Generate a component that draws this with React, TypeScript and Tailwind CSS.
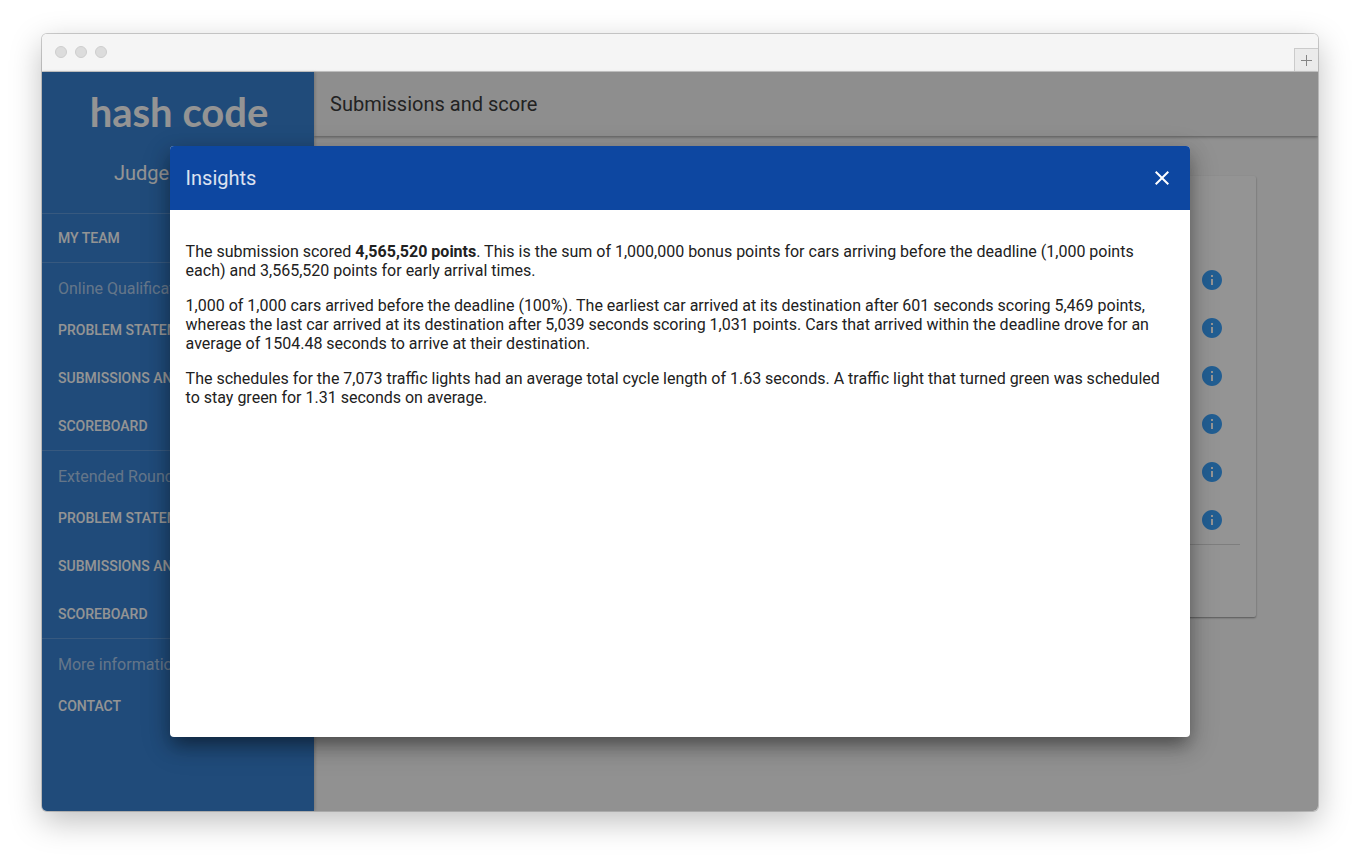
import React from "react";

type NavGroup = { heading?: string; items: string[] };

const groups: NavGroup[] = [
  { items: ["My team"] },
  {
    heading: "Online Qualifications",
    items: ["Problem statement", "Submissions and score", "Scoreboard"],
  },
  {
    heading: "Extended Round",
    items: ["Problem statement", "Submissions and score", "Scoreboard"],
  },
  { heading: "More information", items: ["Contact"] },
];

function InfoIcon() {
  return (
    <svg viewBox="0 0 24 24" className="size-6" fill="currentColor" aria-hidden="true">
      <path d="M12 2C6.48 2 2 6.48 2 12s4.48 10 10 10 10-4.48 10-10S17.52 2 12 2zm1 15h-2v-6h2v6zm0-8h-2V7h2v2z" />
    </svg>
  );
}

function CloseIcon() {
  return (
    <svg viewBox="0 0 24 24" className="size-6" fill="currentColor" aria-hidden="true">
      <path d="M19 6.41 17.59 5 12 10.59 6.41 5 5 6.41 10.59 12 5 17.59 6.41 19 12 13.41 17.59 19 19 17.59 13.41 12z" />
    </svg>
  );
}

function TitleBar() {
  return (
    <div className="flex h-[38px] shrink-0 items-start justify-between border-b border-[#cbcbcb] bg-[#f5f5f5] pl-[13px]">
      <div className="flex gap-2 pt-3">
        <span className="size-3 rounded-full border border-[#cecece] bg-[#dcdcdc]" />
        <span className="size-3 rounded-full border border-[#cecece] bg-[#dcdcdc]" />
        <span className="size-3 rounded-full border border-[#cecece] bg-[#dcdcdc]" />
      </div>
      <button
        aria-label="New tab"
        className="flex h-[23px] w-6 items-center justify-center self-end border-t border-l border-[#cbcbcb] bg-[#ebebeb] text-[#858585]"
      >
        <svg viewBox="0 0 11 11" className="size-[11px]" stroke="currentColor" aria-hidden="true">
          <path d="M5.5 0v11M0 5.5h11" />
        </svg>
      </button>
    </div>
  );
}

function Sidebar() {
  return (
    <nav className="z-10 w-[272px] shrink-0 bg-[#3781d2] text-white shadow-[1px_0_3px_rgba(0,0,0,0.2)]">
      <div className="flex h-[141px] flex-col">
        <div className="flex h-20 items-center justify-center pl-0.5 font-['Lato',sans-serif] text-[40px] leading-none font-bold">
          hash code
        </div>
        <div className="pt-[7px] pl-[72px] text-xl">Judge</div>
      </div>
      {groups.map((group, i) => (
        <div key={i} className="border-t border-white/20">
          {group.heading && (
            <h2 className="flex h-[43px] items-end px-4 pb-[5px] leading-6 text-white/60">{group.heading}</h2>
          )}
          <ul>
            {group.items.map((item) => (
              <li key={item}>
                <a href="#" className="flex h-12 items-center px-4 text-sm font-medium whitespace-nowrap uppercase">
                  {item}
                </a>
              </li>
            ))}
          </ul>
        </div>
      ))}
    </nav>
  );
}

function ScoreCard() {
  return (
    <section className="mx-[62px] mt-10 rounded-xs bg-white px-4 pt-20 pb-[72px] shadow-[0_1px_2px_rgba(0,0,0,0.4)]">
      <ul className="border-b border-black/15">
        {[0, 1, 2, 3, 4, 5].map((row) => (
          <li key={row} className="flex h-12 items-center justify-end pr-4">
            <button aria-label="Insights" className="text-[#3ca2fc]">
              <InfoIcon />
            </button>
          </li>
        ))}
      </ul>
    </section>
  );
}

function InsightsDialog() {
  return (
    <div className="absolute inset-0 z-20 flex items-center justify-center bg-black/42">
      <div
        role="dialog"
        aria-labelledby="insights-title"
        className="flex h-4/5 w-4/5 flex-col overflow-hidden rounded-sm bg-white shadow-[0_11px_15px_-7px_rgba(0,0,0,0.2),0_9px_30px_4px_rgba(0,0,0,0.1),0_8px_20px_rgba(0,0,0,0.3)]"
      >
        <header className="flex h-16 shrink-0 items-center justify-between bg-[#0d47a1] px-4 text-white/85">
          <h2 id="insights-title" className="text-xl">
            Insights
          </h2>
          <button aria-label="Close" className="text-white">
            <CloseIcon />
          </button>
        </header>
        <div className="space-y-4 px-4 py-8 leading-[19px] text-[#212121]">
          <p>
            The submission scored <strong className="font-bold">4,565,520 points</strong>. This is the sum of 1,000,000
            bonus points for cars arriving before the deadline (1,000 points each) and 3,565,520 points for early
            arrival times.
          </p>
          <p>
            1,000 of 1,000 cars arrived before the deadline (100%). The earliest car arrived at its destination after
            601 seconds scoring 5,469 points, whereas the last car arrived at its destination after 5,039 seconds
            scoring 1,031 points. Cars that arrived within the deadline drove for an average of 1504.48 seconds to
            arrive at their destination.
          </p>
          <p>
            The schedules for the 7,073 traffic lights had an average total cycle length of 1.63 seconds. A traffic
            light that turned green was scheduled to stay green for 1.31 seconds on average.
          </p>
        </div>
      </div>
    </div>
  );
}

export default function App() {
  return (
    <div className="flex min-h-screen bg-white px-[42px] pt-[34px] pb-[50px] font-['Roboto',sans-serif] text-base">
      <div className="flex flex-1 flex-col overflow-hidden rounded-[5px] shadow-[0_0_0_1px_rgba(0,0,0,0.18),0_10px_32px_rgba(0,0,0,0.26)]">
        <TitleBar />
        <div className="relative flex flex-1">
          <Sidebar />
          <main className="flex-1 bg-[#fafafa]">
            <header className="flex h-16 items-center bg-[#f5f5f5] px-4 shadow-[0_1px_3px_rgba(0,0,0,0.4)]">
              <h1 className="text-xl text-[#3c3c3c]">Submissions and score</h1>
            </header>
            <ScoreCard />
          </main>
          <InsightsDialog />
        </div>
      </div>
    </div>
  );
}
